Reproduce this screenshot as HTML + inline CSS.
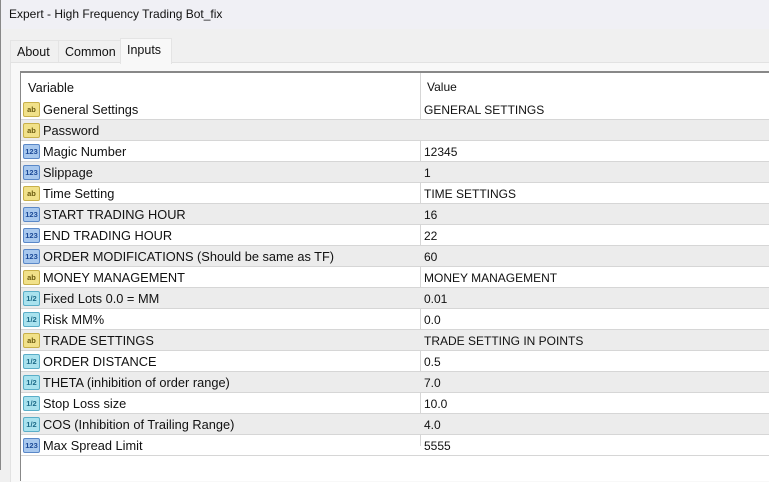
<!DOCTYPE html>
<html><head><meta charset="utf-8"><style>
*{margin:0;padding:0;box-sizing:border-box}
body{width:769px;height:470px;overflow:hidden;background:#f0f0f0;font-family:"Liberation Sans",sans-serif;font-size:12px;color:#111;position:relative}
.title{position:absolute;left:0;top:0;width:769px;height:29px;background:#f0f0f5;padding:7px 0 0 9px;font-size:12px}
.lb{position:absolute;left:0;top:0;width:1px;height:470px;background:#888}
.tab{position:absolute;top:40px;height:22px;background:#f0f0f0;border:1px solid #e4e4e4;border-bottom:none;padding:4px 0 0 6px;font-size:12.5px}
.panel{position:absolute;left:10px;top:62px;width:770px;height:420px;border-left:1px solid #e2e2e2;border-top:1px solid #e2e2e2;background:#f8f8f8}
.tbl{position:absolute;left:20px;top:71px;width:760px;height:410px;background:#fff;border-top:2px solid #888;border-left:1px solid #888}
.row{position:absolute;left:0;width:760px;height:21px;border-bottom:1px solid #d6d6d6}
.g{background:#ececec}
.v{position:absolute;left:22px;top:3px;white-space:nowrap;font-size:12.8px}
.val{position:absolute;left:403px;top:4px;white-space:nowrap}
.ic{position:absolute;left:2px;top:3px;width:17px;height:15px;border-radius:2px;font-size:7.5px;font-weight:bold;text-align:center;line-height:14px}
.ab{background:#f1e189;border:1px solid #c8b04a;color:#6a5a10}
.n{background:#a8c8ee;border:1px solid #5a88c8;color:#1c4a98}
.f{background:#a9e2ee;border:1px solid #5aaec8;color:#1c6a88}
.sep{position:absolute;left:399px;top:0;width:1px;height:373px;background:#d6d6d6}
</style></head><body>
<div class="title">Expert - High Frequency Trading Bot_fix</div>
<div class="tab" style="left:10px;width:49px">About</div>
<div class="tab" style="left:58px;width:63px">Common</div>
<div class="panel"></div>
<div class="tab" style="left:120px;top:38px;height:26px;width:52px;background:#f8f8f8">Inputs</div>
<div class="tbl">
<div class="sep"></div>
<div class="row" style="top:0;height:26px;border:none"><span class="v" style="left:7px;top:7px">Variable</span><span class="val" style="top:7px;left:406px">Value</span></div>
<div class="row" style="top:26px"><span class="ic ab">ab</span><span class="v">General Settings</span><span class="val">GENERAL SETTINGS</span></div>
<div class="row g" style="top:47px"><span class="ic ab">ab</span><span class="v">Password</span><span class="val"></span></div>
<div class="row" style="top:68px"><span class="ic n">123</span><span class="v">Magic Number</span><span class="val">12345</span></div>
<div class="row g" style="top:89px"><span class="ic n">123</span><span class="v">Slippage</span><span class="val">1</span></div>
<div class="row" style="top:110px"><span class="ic ab">ab</span><span class="v">Time Setting</span><span class="val">TIME SETTINGS</span></div>
<div class="row g" style="top:131px"><span class="ic n">123</span><span class="v">START TRADING HOUR</span><span class="val">16</span></div>
<div class="row" style="top:152px"><span class="ic n">123</span><span class="v">END TRADING HOUR</span><span class="val">22</span></div>
<div class="row g" style="top:173px"><span class="ic n">123</span><span class="v">ORDER MODIFICATIONS (Should be same as TF)</span><span class="val">60</span></div>
<div class="row" style="top:194px"><span class="ic ab">ab</span><span class="v">MONEY MANAGEMENT</span><span class="val">MONEY MANAGEMENT</span></div>
<div class="row g" style="top:215px"><span class="ic f">1/2</span><span class="v">Fixed Lots 0.0 = MM</span><span class="val">0.01</span></div>
<div class="row" style="top:236px"><span class="ic f">1/2</span><span class="v">Risk MM%</span><span class="val">0.0</span></div>
<div class="row g" style="top:257px"><span class="ic ab">ab</span><span class="v">TRADE SETTINGS</span><span class="val">TRADE SETTING IN POINTS</span></div>
<div class="row" style="top:278px"><span class="ic f">1/2</span><span class="v">ORDER DISTANCE</span><span class="val">0.5</span></div>
<div class="row g" style="top:299px"><span class="ic f">1/2</span><span class="v">THETA (inhibition of order range)</span><span class="val">7.0</span></div>
<div class="row" style="top:320px"><span class="ic f">1/2</span><span class="v">Stop Loss size</span><span class="val">10.0</span></div>
<div class="row g" style="top:341px"><span class="ic f">1/2</span><span class="v">COS (Inhibition of Trailing Range)</span><span class="val">4.0</span></div>
<div class="row" style="top:362px"><span class="ic n">123</span><span class="v">Max Spread Limit</span><span class="val">5555</span></div>
</div>
<div class="lb"></div>
</body></html>
